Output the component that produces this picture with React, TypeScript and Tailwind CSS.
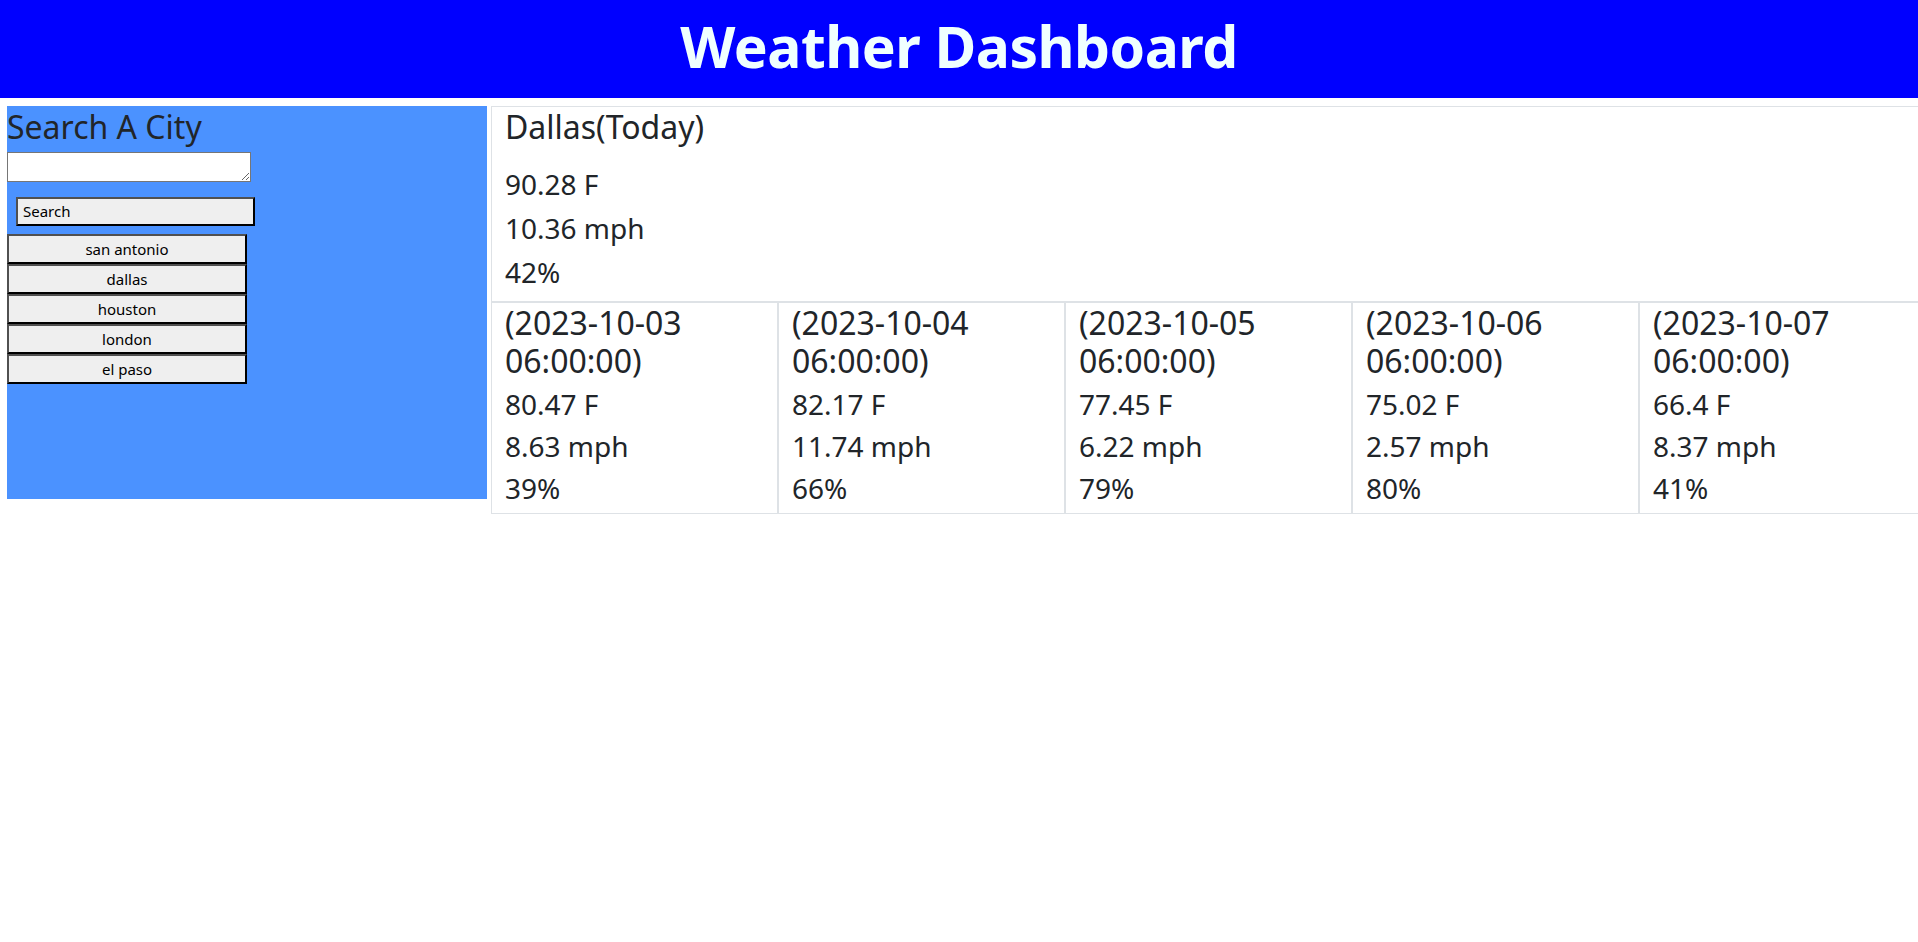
const cities = ['san antonio', 'dallas', 'houston', 'london', 'el paso'];

const today = { city: 'Dallas', temp: '90.28', wind: '10.36', humidity: '42' };

const forecast = [
  { date: '2023-10-03 06:00:00', temp: '80.47', wind: '8.63', humidity: '39' },
  { date: '2023-10-04 06:00:00', temp: '82.17', wind: '11.74', humidity: '66' },
  { date: '2023-10-05 06:00:00', temp: '77.45', wind: '6.22', humidity: '79' },
  { date: '2023-10-06 06:00:00', temp: '75.02', wind: '2.57', humidity: '80' },
  { date: '2023-10-07 06:00:00', temp: '66.4', wind: '8.37', humidity: '41' },
];

export default function App() {
  return (
    <div className="min-h-screen w-full overflow-hidden bg-white font-['Noto_Sans',sans-serif] text-[#212529]">
      {/* Header */}
      <header className="h-[98px] bg-[#0000ff] pt-[16px] text-center">
        <h1 className="text-[57px] leading-[60px] font-bold tracking-[-0.5px] text-[#f0ffff]">Weather Dashboard</h1>
      </header>

      <div className="mt-2 flex items-start gap-1 pl-[7px]">
        {/* Search sidebar */}
        <aside className="h-[393px] w-[480px] shrink-0 bg-[#4b92ff]">
          <h2 className="pt-[2px] text-[32px] leading-[38px]">Search A City</h2>
          <textarea className="mt-[6px] block h-[30px] w-[244px] border border-[#767676] bg-white" />
          <button className="ml-[9px] mt-[15px] block h-[29px] w-[239px] border-2 border-t-[#505050] border-l-[#505050] border-r-black border-b-black bg-[#efefef] pl-[5px] text-left text-[15px] leading-[25px] text-black">
            Search
          </button>
          <div className="mt-2 flex flex-col">
            {cities.map((c) => (
              <button
                key={c}
                className="h-[30px] w-[240px] border-2 border-t-[#505050] border-l-[#505050] border-r-black border-b-black bg-[#efefef] text-center text-[15px] leading-[26px] text-black"
              >
                {c}
              </button>
            ))}
          </div>
        </aside>

        {/* Weather */}
        <main className="flex w-[1435px] shrink-0 flex-col">
          <section className="h-[196px] border border-[#dee2e6] px-[13px] pt-px">
            <h2 className="text-[32px] leading-[38px]">{today.city}(Today)</h2>
            <div className="mt-4 text-[28px] leading-[44px]">
              <p>{today.temp} F</p>
              <p>{today.wind} mph</p>
              <p>{today.humidity}%</p>
            </div>
          </section>

          <div className="flex">
            {forecast.map((f) => (
              <div key={f.date} className="h-[212px] w-[287px] shrink-0 border border-[#dee2e6] px-[13px] pt-px">
                <h3 className="text-[32px] leading-[38px]">({f.date})</h3>
                <div className="mt-[3px] text-[28px] leading-[42px]">
                  <p>{f.temp} F</p>
                  <p>{f.wind} mph</p>
                  <p>{f.humidity}%</p>
                </div>
              </div>
            ))}
          </div>
        </main>
      </div>
    </div>
  );
}
